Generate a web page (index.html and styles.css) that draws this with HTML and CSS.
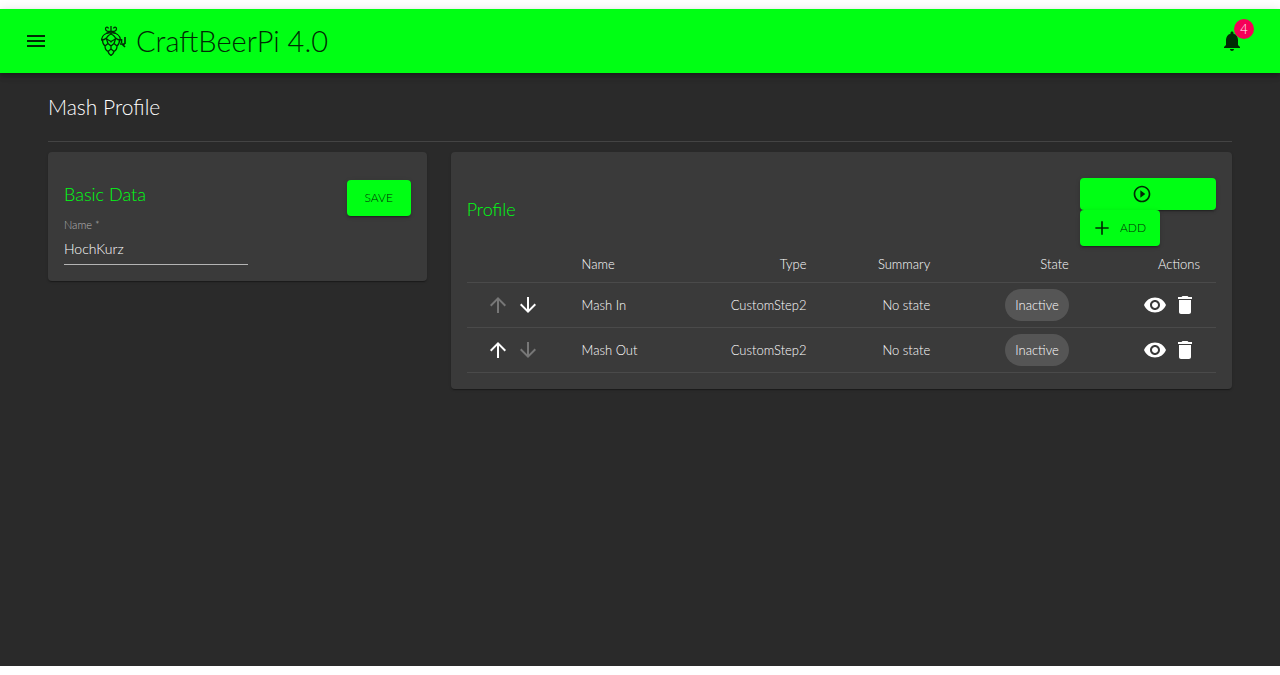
FILE: index.html
```html
<!DOCTYPE html>
<html lang="en">
<head>
<meta charset="utf-8">
<meta name="viewport" content="width=device-width, initial-scale=1">
<title>CraftBeerPi 4.0</title>
<link rel="stylesheet" href="styles.css">
</head>
<body>
<svg class="sprite" aria-hidden="true">
  <symbol id="up" viewBox="0 0 24 24"><path d="M4 12l1.41 1.41L11 7.83V20h2V7.83l5.58 5.59L20 12l-8-8-8 8z"/></symbol>
  <symbol id="down" viewBox="0 0 24 24"><path d="M20 12l-1.41-1.41L13 16.17V4h-2v12.17l-5.58-5.59L4 12l8 8 8-8z"/></symbol>
  <symbol id="eye" viewBox="0 0 24 24"><path d="M12 4.5C7 4.5 2.73 7.61 1 12c1.73 4.39 6 7.5 11 7.5s9.27-3.11 11-7.5c-1.73-4.39-6-7.5-11-7.5zM12 17c-2.76 0-5-2.24-5-5s2.24-5 5-5 5 2.24 5 5-2.24 5-5 5zm0-8c-1.66 0-3 1.34-3 3s1.34 3 3 3 3-1.34 3-3-1.34-3-3-3z"/></symbol>
  <symbol id="trash" viewBox="0 0 24 24"><path d="M6 19c0 1.1.9 2 2 2h8c1.1 0 2-.9 2-2V7H6v12zM19 4h-3.500l-1-1h-5l-1 1H5v2h14V4z"/></symbol>
</svg>
<div class="app">
  <header class="bar">
    <button class="icon-btn menu" type="button" aria-label="Menu"><svg class="icon" viewBox="0 0 24 24"><path d="M3 18h18v-2H3v2zm0-5h18v-2H3v2zm0-7v2h18V6H3z"/></svg></button>
    <div class="brand">
      <svg class="hop" viewBox="0 0 26 30" aria-hidden="true">
        <path d="M10 0v5M10 5C8.500 6 4.500 5.500 4.500 3S7 .5 7.500 2.500M10 5c1.500 1 5.500.5 5.500-2S13 .5 12.500 2.500M5 7.500c3-2 7-2 10 0"/>
        <path d="M10 7C5 6.500 1 9 .5 14c2 0 3.500-.5 5-2M10 7c5-.5 9 2 9.500 7-2 0-3.500-.5-5-2M10 8C7 9.500 5.500 11 5.500 13L10 15.500l4.500-2.500c0-2-1.500-3.500-4.500-5z"/>
        <path d="M1.500 14c0 2.500.5 4.500 2.500 6l3-2.500L5.500 13M18.500 14c0 2.500-.5 4.500-2.500 6l-3-2.500 1.500-4.500M7 17.500l3 2.500 3-2.500M10 15.500v1M4 20c0 2.500 1 4.500 3 5.500l3-2.500v-3M16 20c0 2.500-1 4.500-3 5.500L10 23M7 25.500c.5 2 1.500 3 3 4 1.500-1 2.500-2 3-4"/>
        <path d="M19 18h5M24 11v7M20.500 13v4M21 18l3 3" class="tap"/>
      </svg>
      <span class="brand-name">CraftBeerPi 4.0</span>
    </div>
    <button class="icon-btn bell" type="button" aria-label="4 notifications"><svg class="icon" viewBox="0 0 24 24"><path d="M12 22c1.100 0 2-.9 2-2h-4c0 1.100.89 2 2 2zm6-6v-5c0-3.070-1.640-5.640-4.500-6.320V4c0-.83-.67-1.500-1.500-1.500s-1.500.67-1.500 1.500v.68C7.630 5.360 6 7.920 6 11v5l-2 2v1h16v-1l-2-2z"/></svg><span class="badge">4</span></button>
  </header>
  <main class="page">
    <h1 class="title">Mash Profile</h1>
    <hr class="rule">
    <div class="cards">
      <section class="card basic">
        <div class="basic-main">
          <h2 class="heading">Basic Data</h2>
          <label class="label" for="name">Name *</label>
          <input class="field" id="name" type="text" value="HochKurz" required>
        </div>
        <button class="btn" type="button">SAVE</button>
      </section>
      <section class="card profile">
        <div class="profile-head">
          <h2 class="heading">Profile</h2>
          <div class="buttons">
            <button class="btn play" type="button" aria-label="Start"><svg class="icon small" viewBox="0 0 24 24"><path d="M10 16.500l6-4.500-6-4.500v9zM12 2C6.480 2 2 6.480 2 12s4.480 10 10 10 10-4.480 10-10S17.520 2 12 2zm0 18c-4.410 0-8-3.590-8-8s3.590-8 8-8 8 3.590 8 8-3.590 8-8 8z"/></svg></button>
            <button class="btn add" type="button"><svg class="icon small" viewBox="0 0 24 24"><path d="M20 13h-7v7h-2v-7H4v-2h7V4h2v7h7v2z"/></svg>ADD</button>
          </div>
        </div>
        <table class="steps">
          <colgroup><col class="c-move"><col class="c-name"><col class="c-type"><col class="c-summary"><col class="c-state"><col class="c-actions"></colgroup>
          <thead><tr><th></th><th class="left">Name</th><th>Type</th><th>Summary</th><th>State</th><th>Actions</th></tr></thead>
          <tbody>
            <tr>
              <td><div class="move"><button class="icon-btn" type="button" aria-label="Move up" disabled><svg class="icon"><use href="#up"/></svg></button><button class="icon-btn" type="button" aria-label="Move down"><svg class="icon"><use href="#down"/></svg></button></div></td>
              <td class="left">Mash In</td><td>CustomStep2</td><td>No state</td><td><span class="chip">Inactive</span></td>
              <td><div class="actions"><button class="icon-btn" type="button" aria-label="View"><svg class="icon"><use href="#eye"/></svg></button><button class="icon-btn" type="button" aria-label="Delete"><svg class="icon"><use href="#trash"/></svg></button></div></td>
            </tr>
            <tr>
              <td><div class="move"><button class="icon-btn" type="button" aria-label="Move up"><svg class="icon"><use href="#up"/></svg></button><button class="icon-btn" type="button" aria-label="Move down" disabled><svg class="icon"><use href="#down"/></svg></button></div></td>
              <td class="left">Mash Out</td><td>CustomStep2</td><td>No state</td><td><span class="chip">Inactive</span></td>
              <td><div class="actions"><button class="icon-btn" type="button" aria-label="View"><svg class="icon"><use href="#eye"/></svg></button><button class="icon-btn" type="button" aria-label="Delete"><svg class="icon"><use href="#trash"/></svg></button></div></td>
            </tr>
          </tbody>
        </table>
      </section>
    </div>
  </main>
</div>
</body>
</html>
```
FILE: styles.css
```css
*, *::before, *::after { box-sizing: border-box; }
body {
  margin: 0;
  padding: 9px 0;
  background: #fff;
  color: #fff;
  font-family: Lato, Roboto, "Open Sans", sans-serif;
  font-weight: 300;
  font-size: 13px;
  line-height: 20px;
}
button, input { font: inherit; color: inherit; }
h1, h2 { margin: 0; font-weight: 300; }
.sprite { display: none; }
.app { min-height: calc(100vh - 18px); background: #2a2a2a; }
.icon { display: block; width: 24px; height: 24px; fill: currentColor; }
.small { width: 20px; height: 20px; }
.icon-btn { position: relative; padding: 3px; border: 0; background: none; cursor: pointer; }
.icon-btn:disabled { color: #777; cursor: default; }

.bar {
  display: flex;
  align-items: center;
  height: 64px;
  padding: 0 33px 0 21px;
  background: #00ff14;
  color: #002b04;
  box-shadow: 0 2px 4px -1px rgba(0,0,0,.2), 0 4px 5px rgba(0,0,0,.14), 0 1px 10px rgba(0,0,0,.12);
}
.brand { display: flex; align-items: center; gap: 9px; margin-left: 50px; }
.hop { width: 26px; height: 30px; fill: none; stroke: currentColor; stroke-width: 1.3; stroke-linejoin: round; }
.tap { stroke-width: 1.6; }
.brand-name { font-size: 29px; line-height: 40px; }
.bell { margin-left: auto; }
.badge {
  position: absolute;
  top: -7px;
  right: -7px;
  width: 20px;
  height: 20px;
  border-radius: 50%;
  background: #f50057;
  color: #fff;
  font-size: 13px;
}

.page { padding: 16px 48px; }
.title { font-size: 21px; line-height: 36px; }
.rule { height: 1px; margin: 16px 0 10px; border: 0; background: #444; }
.cards { display: grid; grid-template-columns: repeat(12, minmax(0, 1fr)); column-gap: 24px; align-items: start; }
.card {
  padding: 16px;
  border-radius: 4px;
  background: #3a3a3a;
  box-shadow: 0 2px 1px -1px rgba(0,0,0,.2), 0 1px 1px rgba(0,0,0,.14), 0 1px 3px rgba(0,0,0,.12);
}
.basic { grid-column: span 4; display: flex; justify-content: space-between; align-items: flex-start; padding-top: 28px; }
.profile { grid-column: span 8; padding-top: 26px; }
.heading { color: #00ff14; font-size: 18px; line-height: 28px; }
.basic-main { display: flex; flex-direction: column; width: 53%; }
.label { margin-top: 10px; color: #b8b8b8; font-size: 11px; line-height: 14px; }
.field {
  width: 100%;
  height: 33px;
  padding: 0;
  border: 0;
  border-bottom: 1px solid #b4b4b4;
  border-radius: 0;
  background: none;
  outline: 0;
  font-size: 14px;
}
.btn {
  display: flex;
  align-items: center;
  justify-content: center;
  min-width: 64px;
  height: 36px;
  padding: 0 16px;
  border: 0;
  border-radius: 4px;
  background: #00ff14;
  color: #002b04;
  box-shadow: 0 3px 1px -2px rgba(0,0,0,.2), 0 2px 2px rgba(0,0,0,.14), 0 1px 5px rgba(0,0,0,.12);
  cursor: pointer;
}
.btn { font-size: 12px; }
.basic .btn { padding: 0; }
.profile-head { display: flex; justify-content: space-between; }
.profile-head .heading { padding-top: 17px; }
.buttons { display: flex; flex-direction: column; align-items: flex-start; width: 136px; }
.play { width: 100%; height: 32px; padding-right: 28px; }
.add { justify-content: flex-start; width: 80px; padding: 0 12px; gap: 8px; }

.steps { width: 100%; border-collapse: separate; border-spacing: 0; table-layout: fixed; }
.steps th, .steps td { padding: 6px 16px; border-bottom: 1px solid #4a4a4a; text-align: right; font-weight: 300; line-height: 24px; white-space: nowrap; }
.steps .left { text-align: left; }
.c-move { width: 13.2%; }
.c-name { width: 16.6%; }
.c-type { width: 17.7%; }
.c-summary { width: 16.5%; }
.c-state { width: 18.5%; }
.c-actions { width: 17.5%; }
.move, .actions { display: flex; }
.actions { justify-content: flex-end; }
.chip { display: inline-block; padding: 0 10px; border-radius: 16px; background: #555; line-height: 32px; vertical-align: top; }
```
